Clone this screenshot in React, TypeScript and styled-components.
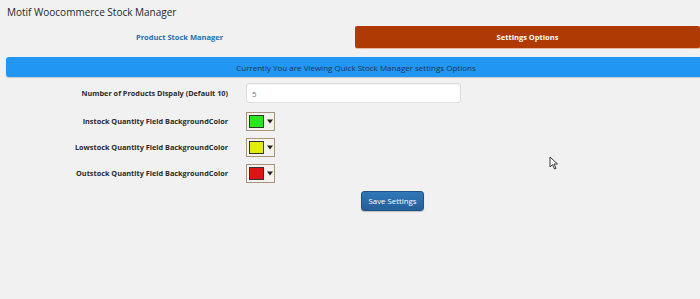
import React from "react";
import styled, { createGlobalStyle } from "styled-components";

const Global = createGlobalStyle`
  html, body { margin: 0; padding: 0; background: #f1f1f1; }
  body { font-family: "Open Sans", "Noto Sans", sans-serif; color: #23282d; }
`;

const Page = styled.div`
  position: relative;
  width: 700px;
  height: 299px;
  padding: 4px 0 0 6px;
  box-sizing: border-box;
  overflow: hidden;
`;

const Title = styled.h1`
  margin: 0 0 0 1px;
  font-size: 10px;
  font-weight: 400;
  line-height: 16px;
  color: #23282d;
`;

const Tabs = styled.div`
  display: grid;
  grid-template-columns: 347px 345px;
  gap: 2px;
  margin-top: 6px;
  height: 22px;
`;

const Tab = styled.div<{ $active?: boolean }>`
  display: flex;
  align-items: center;
  justify-content: center;
  font-size: 7.5px;
  font-weight: 700;
  border-radius: 2px;
  background: ${(p) => (p.$active ? "#af3a03" : "transparent")};
  color: ${(p) => (p.$active ? "#ffffff" : "#2271b1")};
  box-shadow: ${(p) => (p.$active ? "0 1px 0 #e8b9a0" : "none")};
`;

const Notice = styled.div`
  margin-top: 9px;
  height: 20px;
  width: 700px;
  background: #2196f3;
  border-radius: 3px;
  display: flex;
  align-items: center;
  justify-content: center;
  font-size: 8px;
  color: #1e3550;
  box-shadow: 0 1px 1px #c8c8c8;
`;

const Form = styled.div`
  display: grid;
  grid-template-columns: 222px 215px;
  column-gap: 18px;
  row-gap: 0;
  margin-top: 1px;
  align-items: center;
`;

const Label = styled.div<{ $h: number }>`
  height: ${(p) => p.$h}px;
  display: flex;
  align-items: center;
  justify-content: flex-end;
  font-size: 7.3px;
  font-weight: 700;
  color: #2c2c2c;
`;

const Cell = styled.div<{ $h: number }>`
  height: ${(p) => p.$h}px;
  display: flex;
  align-items: center;
`;

const TextInput = styled.div`
  width: 215px;
  height: 20px;
  box-sizing: border-box;
  background: #fff;
  border: 1px solid #dddddd;
  border-radius: 3px;
  box-shadow: inset 0 1px 1px rgba(0, 0, 0, 0.05);
  font-size: 8px;
  color: #777;
  display: flex;
  align-items: center;
  padding-left: 5px;
`;

const Picker = styled.div`
  width: 29px;
  height: 19px;
  box-sizing: border-box;
  border: 1px solid #a8927a;
  background: #f4f2ef;
  display: flex;
  align-items: center;
  padding-left: 2px;
  gap: 3px;
`;

const Swatch = styled.div<{ $c: string }>`
  width: 15px;
  height: 13px;
  box-sizing: border-box;
  border: 1px solid #333;
  background: ${(p) => p.$c};
`;

const Arrow = styled.svg`
  display: block;
`;

const ButtonRow = styled.div`
  display: flex;
  justify-content: center;
  padding-left: 79px;
  margin-top: 5px;
`;

const Button = styled.button`
  height: 20px;
  padding: 0 7px;
  font-family: inherit;
  font-size: 7.8px;
  color: #fff;
  background: linear-gradient(#2f78b8, #24609a);
  border: 1px solid #1f5387;
  border-radius: 3px;
  box-shadow: 0 1px 1px rgba(0, 0, 0, 0.2);
`;

const Cursor = styled.svg`
  position: absolute;
  left: 549px;
  top: 156px;
`;

const rows = [
  { label: "Instock Quantity Field BackgroundColor", color: "#2be61b" },
  { label: "Lowstock Quantity Field BackgroundColor", color: "#e2ed0c" },
  { label: "Outstock Quantity Field BackgroundColor", color: "#dc1414" },
];

export default function App() {
  return (
    <Page>
      <Global />
      <Title>Motif Woocommerce Stock Manager</Title>
      <Tabs>
        <Tab>Product Stock Manager</Tab>
        <Tab $active>Settings Options</Tab>
      </Tabs>
      <Notice>Currently You are Viewing Quick Stock Manager settings Options</Notice>
      <Form>
        <Label $h={30}>Number of Products Dispaly (Default 10)</Label>
        <Cell $h={30}>
          <TextInput>5</TextInput>
        </Cell>
        {rows.map((r) => (
          <React.Fragment key={r.label}>
            <Label $h={26}>{r.label}</Label>
            <Cell $h={26}>
              <Picker>
                <Swatch $c={r.color} />
                <Arrow width="6" height="5" viewBox="0 0 6 5">
                  <path d="M0 0.5 H6 L3 4.5 Z" fill="#222" />
                </Arrow>
              </Picker>
            </Cell>
          </React.Fragment>
        ))}
      </Form>
      <ButtonRow>
        <Button>Save Settings</Button>
      </ButtonRow>
      <Cursor width="10" height="14" viewBox="0 0 10 14">
        <path d="M1 1 L1 11 L3.5 8.5 L5.5 13 L7 12.3 L5 8 L8.5 8 Z" fill="#fff" stroke="#222" strokeWidth="0.9" />
      </Cursor>
    </Page>
  );
}
